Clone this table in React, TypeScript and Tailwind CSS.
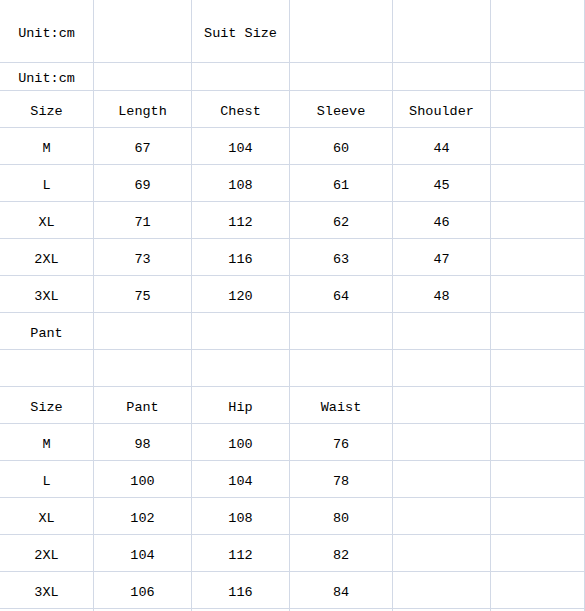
import React from "react";

const rows: { h: string; cells: string[] }[] = [
  { h: "h-[63px]", cells: ["Unit:cm", "", "Suit Size", "", "", ""] },
  { h: "h-[28px]", cells: ["Unit:cm", "", "", "", "", ""] },
  { h: "h-[37px]", cells: ["Size", "Length", "Chest", "Sleeve", "Shoulder", ""] },
  { h: "h-[37px]", cells: ["M", "67", "104", "60", "44", ""] },
  { h: "h-[37px]", cells: ["L", "69", "108", "61", "45", ""] },
  { h: "h-[37px]", cells: ["XL", "71", "112", "62", "46", ""] },
  { h: "h-[37px]", cells: ["2XL", "73", "116", "63", "47", ""] },
  { h: "h-[37px]", cells: ["3XL", "75", "120", "64", "48", ""] },
  { h: "h-[37px]", cells: ["Pant", "", "", "", "", ""] },
  { h: "h-[37px]", cells: ["", "", "", "", "", ""] },
  { h: "h-[37px]", cells: ["Size", "Pant", "Hip", "Waist", "", ""] },
  { h: "h-[37px]", cells: ["M", "98", "100", "76", "", ""] },
  { h: "h-[37px]", cells: ["L", "100", "104", "78", "", ""] },
  { h: "h-[37px]", cells: ["XL", "102", "108", "80", "", ""] },
  { h: "h-[37px]", cells: ["2XL", "104", "112", "82", "", ""] },
  { h: "h-[37px]", cells: ["3XL", "106", "116", "84", "", ""] },
  { h: "h-[37px]", cells: ["", "", "", "", "", ""] },
];

export default function App() {
  return (
    <div className="w-[585px] h-[611px] overflow-hidden bg-white">
      <div
        className="grid grid-cols-[94px_98px_98px_103px_98px_1fr] text-[13.5px] text-black"
        style={{ fontFamily: '"Liberation Mono", "DejaVu Sans Mono", monospace' }}
      >
        {rows.map((r, ri) =>
          r.cells.map((c, ci) => (
            <div
              key={`${ri}-${ci}`}
              className={`${r.h} flex items-center justify-center border-r border-b border-[#d2d9e6] pt-[5px] leading-none whitespace-pre`}
            >
              {c}
            </div>
          ))
        )}
      </div>
    </div>
  );
}
